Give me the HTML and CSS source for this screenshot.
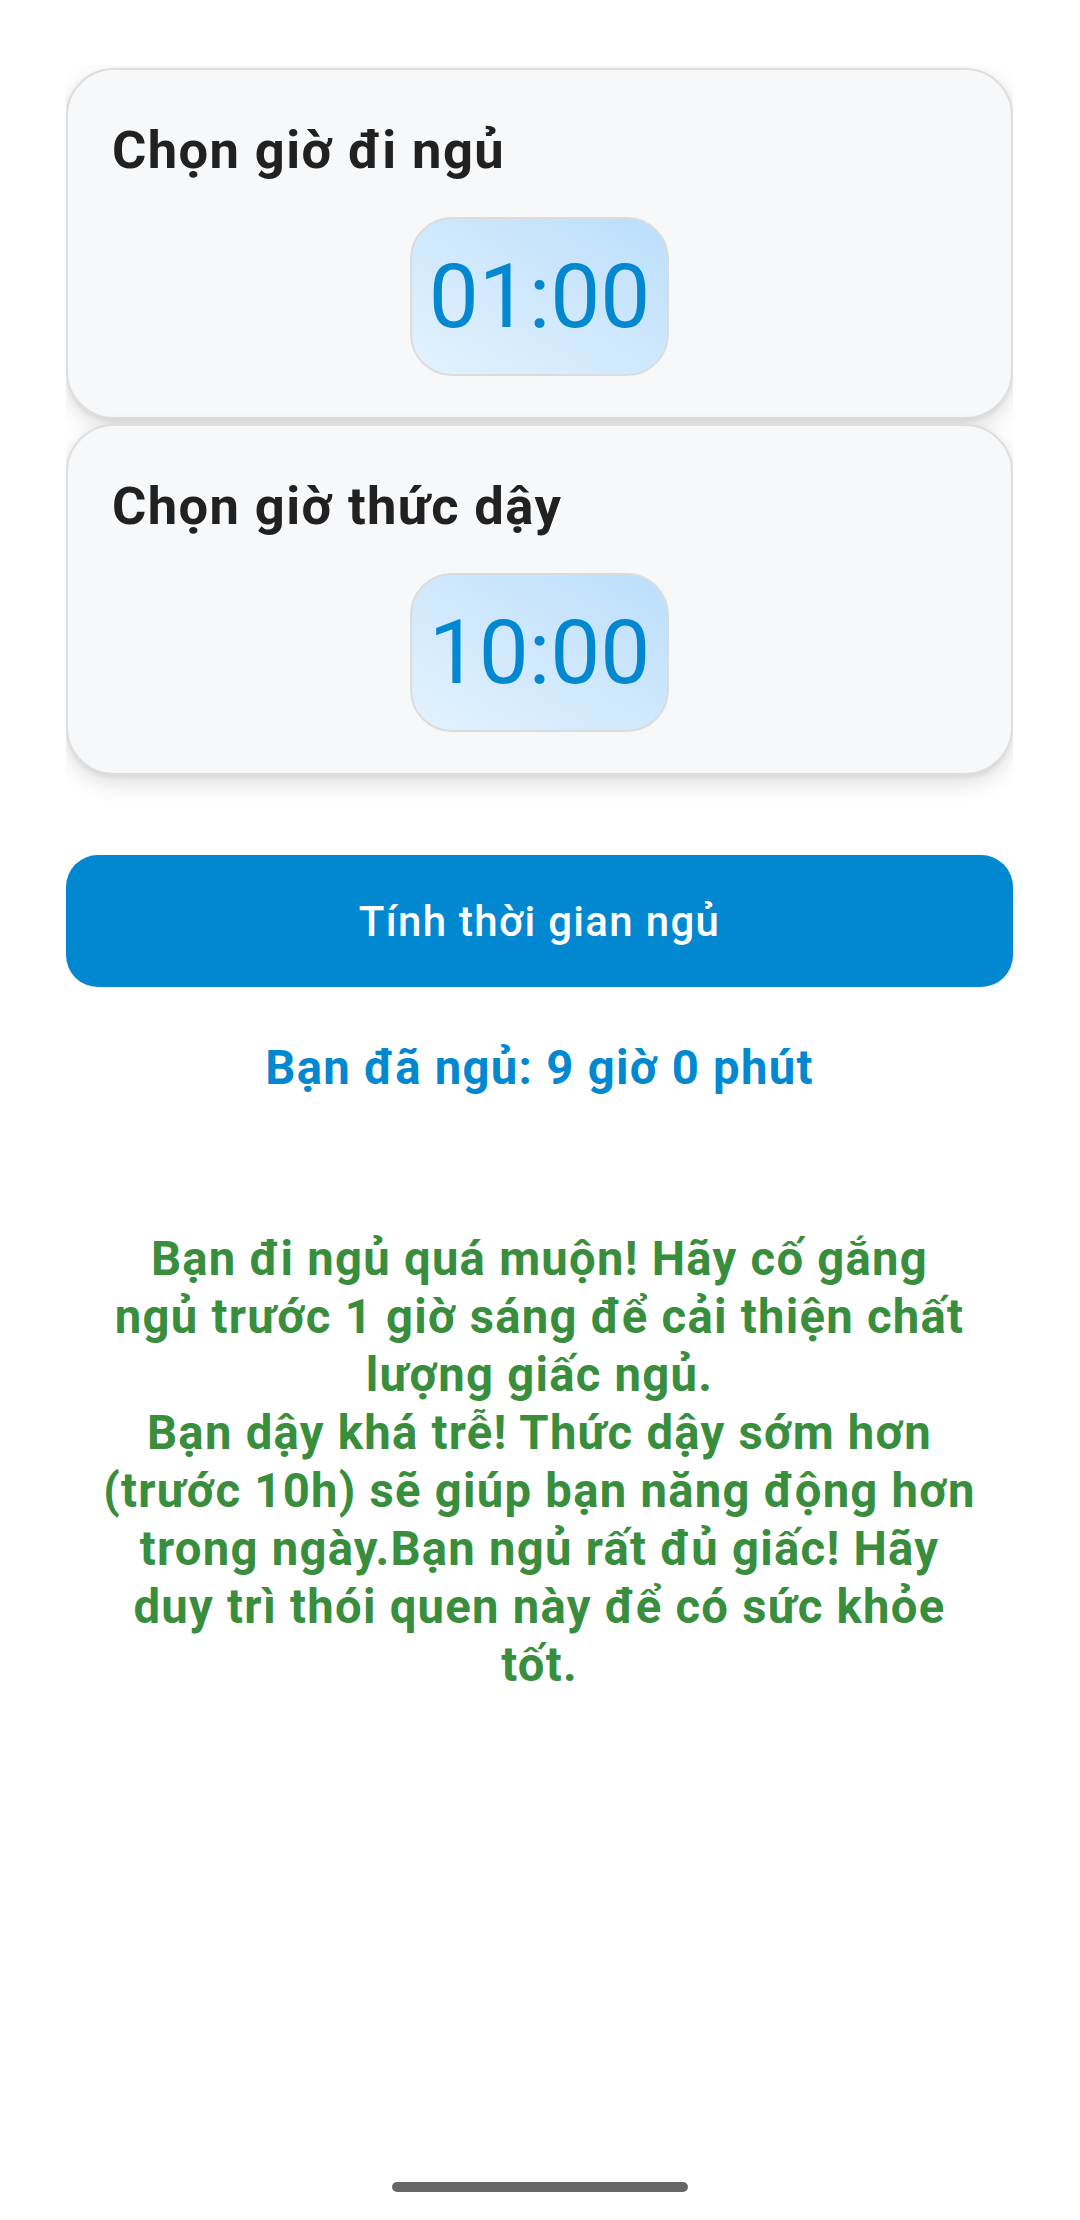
FILE: index.html
```html
<!DOCTYPE html>
<html lang="vi">
<head>
<meta charset="utf-8">
<title>Tính thời gian ngủ</title>
<link rel="stylesheet" href="styles.css">
</head>
<body>
<main class="screen">
  <section class="cards">
    <div class="card">
      <h2 class="card-title">Chọn giờ đi ngủ</h2>
      <div class="time-box">01:00</div>
    </div>
    <div class="card">
      <h2 class="card-title">Chọn giờ thức dậy</h2>
      <div class="time-box">10:00</div>
    </div>
  </section>
  <button class="calc-btn" type="button">Tính thời gian ngủ</button>
  <p class="result">Bạn đã ngủ: 9 giờ 0 phút</p>
  <p class="advice">Bạn đi ngủ quá muộn! Hãy cố gắng<br>ngủ trước 1 giờ sáng để cải thiện chất<br>lượng giấc ngủ.<br>Bạn dậy khá trễ! Thức dậy sớm hơn<br>(trước 10h) sẽ giúp bạn năng động hơn<br>trong ngày.Bạn ngủ rất đủ giấc! Hãy<br>duy trì thói quen này để có sức khỏe<br>tốt.</p>
</main>
<div class="home-bar"></div>
</body>
</html>
```

FILE: styles.css
```css
html, body {
  margin: 0;
  padding: 0;
  background: #ffffff;
}

body {
  width: 1080px;
  height: 2220px;
  position: relative;
  overflow: hidden;
  font-family: Roboto, "Noto Sans", "Liberation Sans", sans-serif;
}

.screen {
  padding: 65px 67px 0 66px;
  display: flex;
  flex-direction: column;
}

.cards {
  display: flex;
  flex-direction: column;
  gap: 5px;
  padding: 3px 0 48px;
  overflow: hidden;
}

.card {
  background: #f7f8fa;
  border: 2px solid #dedede;
  border-radius: 48px;
  padding: 49px 44px 41px;
  display: flex;
  flex-direction: column;
  gap: 36px;
  box-shadow: 0 8px 22px rgba(0, 0, 0, 0.13), 0 2px 5px rgba(0, 0, 0, 0.08);
}

.card-title {
  margin: 0;
  font-size: 52.5px;
  line-height: 62px;
  font-weight: 700;
  letter-spacing: 1.4px;
  color: #212121;
}

.time-box {
  align-self: center;
  width: 229px;
  text-align: center;
  padding: 24px 13px;
  border: 2px solid #dcdcdc;
  border-radius: 42px;
  background: linear-gradient(to right top, #e3f2fd, #bbdefb);
  color: #0288d1;
  font-size: 89px;
  line-height: 107px;
  font-weight: 400;
}

.calc-btn {
  margin-top: 32px;
  height: 132px;
  width: 100%;
  border: none;
  border-radius: 32px;
  background: #0288d1;
  color: #ffffff;
  font-family: Roboto, "Noto Sans", "Liberation Sans", sans-serif;
  font-size: 42px;
  font-weight: 500;
  letter-spacing: 1.3px;
}

.result {
  margin: 54px 0 0;
  text-align: center;
  color: #0288d1;
  font-size: 47.25px;
  line-height: 55px;
  font-weight: 700;
  letter-spacing: 1.3px;
}

.advice {
  margin: 134px 0 0;
  text-align: center;
  color: #388e3c;
  font-size: 47.25px;
  line-height: 58px;
  font-weight: 700;
  letter-spacing: 1.25px;
  white-space: nowrap;
}

.home-bar {
  position: absolute;
  left: 392px;
  top: 2182px;
  width: 296px;
  height: 10px;
  border-radius: 5px;
  background: #666666;
}
```
